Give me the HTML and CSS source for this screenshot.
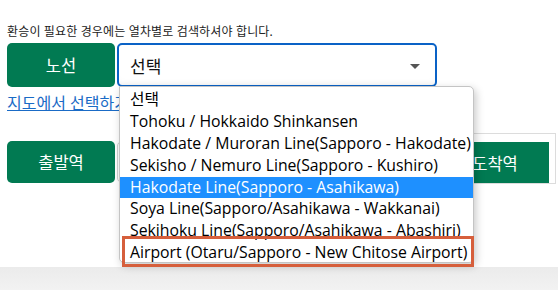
FILE: index.html
```html
<!DOCTYPE html>
<html lang="ko">
<head>
<meta charset="utf-8">
<link rel="stylesheet" href="styles.css">
</head>
<body>
<div class="page">
  <p class="note">환승이 필요한 경우에는 열차별로 검색하셔야 합니다.</p>
  <div class="row row-line">
    <div class="label">노선</div>
    <div class="select focused">
      <span>선택</span>
      <span class="caret"></span>
    </div>
  </div>
  <a class="maplink" href="#">지도에서 선택하기</a>
  <div class="row row-stations">
    <div class="label">출발역</div>
    <div class="select plain"></div>
    <div class="arrive">
      <div class="label">도착역</div>
    </div>
  </div>
</div>
<div class="footer"></div>

<ul class="dropdown">
  <li>선택</li>
  <li>Tohoku / Hokkaido Shinkansen</li>
  <li>Hakodate / Muroran Line(Sapporo - Hakodate)</li>
  <li>Sekisho / Nemuro Line(Sapporo - Kushiro)</li>
  <li class="active">Hakodate Line(Sapporo - Asahikawa)</li>
  <li>Soya Line(Sapporo/Asahikawa - Wakkanai)</li>
  <li>Sekihoku Line(Sapporo/Asahikawa - Abashiri)</li>
  <li>Airport (Otaru/Sapporo - New Chitose Airport)</li>
</ul>
<div class="highlight-box"></div>
</body>
</html>
```
FILE: styles.css
```css
* { box-sizing: border-box; }
html, body { margin: 0; padding: 0; background: #fff; }
body {
  width: 558px;
  height: 290px;
  overflow: hidden;
  position: relative;
  font-family: "Noto Sans", "Noto Sans CJK KR", sans-serif;
  color: #111;
}
.page {
  padding: 24px 0 0 7px;
  height: 267px;
}
.note {
  margin: 0;
  font-size: 12px;
  line-height: 15px;
  height: 19px;
  color: #222;
  letter-spacing: 0.15px;
}
.row {
  display: flex;
  gap: 2px;
}
.row-line { height: 44px; }
.label {
  width: 108px;
  flex: none;
  background: #017a52;
  color: #fff;
  border-radius: 5px;
  display: flex;
  align-items: center;
  justify-content: center;
  font-size: 16.5px;
}
.select {
  position: relative;
  background: #fff;
  border-radius: 5px;
  display: flex;
  align-items: center;
}
.select.focused {
  width: 320px;
  border: 2px solid #0a62c6;
  padding-left: 11px;
  font-size: 17px;
  box-shadow: inset 0 -6px 8px -6px rgba(0,0,0,0.06);
}
.caret {
  position: absolute;
  right: 15px;
  top: 19px;
  width: 0;
  height: 0;
  border-left: 5px solid transparent;
  border-right: 5px solid transparent;
  border-top: 5px solid #555;
}
.maplink {
  display: block;
  margin-top: 6px;
  font-size: 16px;
  line-height: 20px;
  color: #1a6bc6;
  text-decoration: underline;
  width: max-content;
}
.row-stations {
  margin-top: 28px;
  height: 42px;
}
.select.plain {
  width: 322px;
  border: 1px solid #cfcfcf;
}
.arrive {
  flex: none;
  width: 115px;
  margin-top: -8px;
  height: 51px;
  border: 1px solid #dcdcdc;
  border-left: none;
  padding: 8px 6px 0 0;
}
.arrive .label { height: 41px; border-radius: 0; }
.footer {
  height: 23px;
  background: linear-gradient(#ebebeb, #f2f2f2);
}
.dropdown {
  position: absolute;
  left: 119px;
  top: 86px;
  width: 355px;
  height: 177px;
  margin: 0;
  padding: 2px 0 0;
  list-style: none;
  background: #fff;
  border: 1px solid #c4c4c4;
  border-radius: 0 5px 5px 5px;
  box-shadow: 2px 3px 8px rgba(0,0,0,0.22);
  font-family: "Open Sans", "Noto Sans CJK KR", sans-serif;
  font-size: 15.8px;
  color: #000;
}
.dropdown li {
  height: 21.9px;
  line-height: 21.9px;
  padding-left: 10px;
  white-space: nowrap;
  overflow: hidden;
}
.dropdown li.active {
  background: #1e90ff;
  color: #fff;
}
.highlight-box {
  position: absolute;
  left: 122px;
  top: 236px;
  width: 352px;
  height: 31px;
  border: 3px solid #d65f3c;
}
```
